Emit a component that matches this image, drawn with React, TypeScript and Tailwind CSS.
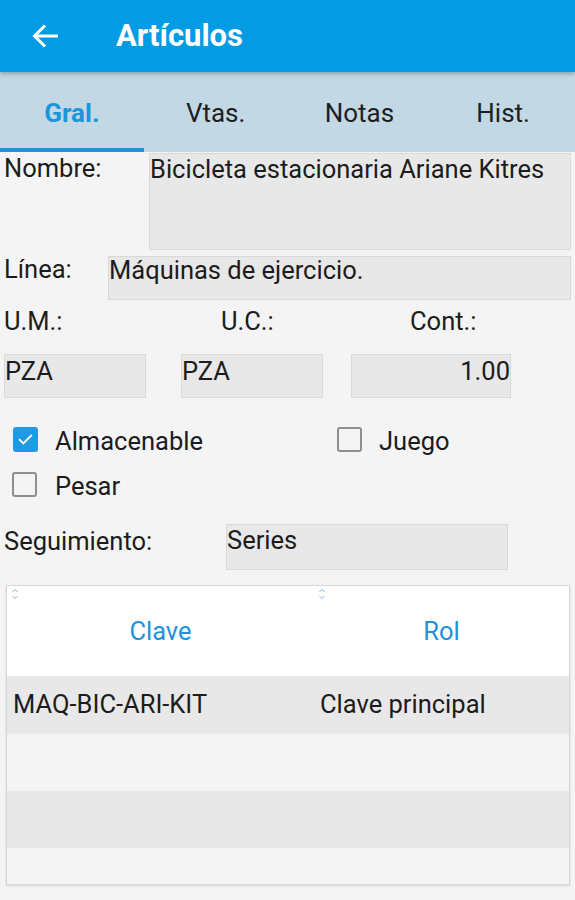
import React from 'react';

const font = { fontFamily: 'Roboto, "Noto Sans", sans-serif' };

function Box({ className = '', children }: { className?: string; children?: React.ReactNode }) {
  return (
    <div
      className={`border border-[#d9d9d9] bg-[#e8e8e8] text-[25.5px] leading-[26px] text-[#1c1c1c] ${className}`}
    >
      {children}
    </div>
  );
}

function Check({ checked = false }: { checked?: boolean }) {
  if (checked) {
    return (
      <div className="flex h-[25px] w-[25px] items-center justify-center rounded-[3px] bg-[#1e9be2]">
        <svg width="17" height="17" viewBox="0 0 24 24" fill="none">
          <path d="M4 12.5l5 5L20 6.5" stroke="white" strokeWidth="2.8" strokeLinecap="square" />
        </svg>
      </div>
    );
  }
  return <div className="h-[25px] w-[25px] rounded-[3px] border-2 border-[#8f8f8f]" />;
}

function SortMark() {
  return (
    <svg width="8" height="12" viewBox="0 0 8 12" fill="none" className="absolute left-[4px] top-[2px]">
      <path d="M1.5 4L4 1.5L6.5 4" stroke="#7fb6e6" strokeWidth="1" />
      <path d="M1.5 8L4 10.5L6.5 8" stroke="#7fb6e6" strokeWidth="1" />
    </svg>
  );
}

export default function App() {
  const tabs = ['Gral.', 'Vtas.', 'Notas', 'Hist.'];

  return (
    <div className="h-[900px] w-[575px] overflow-hidden bg-[#f4f4f4]" style={font}>
      {/* app bar */}
      <div className="relative z-10 flex h-[72px] items-center bg-[#049be5] shadow-[0_2px_4px_rgba(0,0,0,0.25)]">
        <svg width="28" height="26" viewBox="0 0 28 26" fill="none" className="ml-[32px]">
          <path d="M26 13H3M13 2.5L2.5 13L13 23.5" stroke="white" strokeWidth="3" />
        </svg>
        <h1 className="ml-[56px] text-[31px] font-bold text-white">Artículos</h1>
      </div>

      {/* tabs */}
      <div className="flex h-[80px] bg-[#c2d8e5]">
        {tabs.map((t, i) => (
          <div key={t} className="relative flex flex-1 items-center justify-center pt-[2px]">
            <span
              className={`text-[26px] ${i === 0 ? 'font-bold text-[#1a96dc]' : 'text-[#1e1e1e]'}`}
            >
              {t}
            </span>
            {i === 0 && <div className="absolute bottom-0 left-0 right-0 h-[4px] bg-[#1a96dc]" />}
          </div>
        ))}
      </div>

      {/* form */}
      <div className="text-[25.5px] leading-[26px] text-[#1c1c1c]">
        <div className="mt-[1px] flex">
          <div className="w-[149px] pl-[4px] pt-[2px]">Nombre:</div>
          <Box className="mr-[4px] h-[97px] flex-1 pt-[2px]">Bicicleta estacionaria Ariane Kitres</Box>
        </div>

        <div className="mt-[6px] flex">
          <div className="w-[108px] pl-[4px]">Línea:</div>
          <Box className="mr-[4px] h-[44px] flex-1">Máquinas de ejercicio.</Box>
        </div>

        <div className="flex h-[54px] pt-[8px]">
          <div className="w-[221px] pl-[4px]">U.M.:</div>
          <div className="w-[189px]">U.C.:</div>
          <div>Cont.:</div>
        </div>

        <div className="flex h-[44px]">
          <Box className="ml-[4px] w-[142px] pt-[3px]">PZA</Box>
          <Box className="ml-[35px] w-[142px] pt-[3px]">PZA</Box>
          <Box className="ml-[28px] w-[160px] pt-[3px] text-right">1.00</Box>
        </div>

        <div className="mt-[19px] flex h-[45px] items-center">
          <div className="ml-[13px]">
            <Check checked />
          </div>
          <span className="ml-[17px] w-[282px] pt-[2px]">Almacenable</span>
          <Check />
          <span className="ml-[17px] pt-[2px]">Juego</span>
        </div>
        <div className="flex h-[45px] items-center">
          <div className="ml-[12px]">
            <Check />
          </div>
          <span className="ml-[18px] pt-[2px]">Pesar</span>
        </div>

        <div className="mt-[17px] flex">
          <div className="w-[226px] pl-[4px] pt-[4px]">Seguimiento:</div>
          <Box className="h-[46px] w-[282px] pt-[2px]">Series</Box>
        </div>
      </div>

      {/* table */}
      <div className="ml-[6px] mt-[15px] w-[564px] border border-[#d6d6d6] shadow-[0_1px_2px_rgba(0,0,0,0.12)]">
        <div className="flex h-[90px] bg-white text-[25.5px] text-[#1f93d9]">
          <div className="relative flex w-[307px] items-center justify-center">
            <SortMark />
            Clave
          </div>
          <div className="relative flex flex-1 items-center justify-center">
            <SortMark />
            Rol
          </div>
        </div>
        <div className="flex h-[57px] items-center bg-[#e8e8e8] text-[25.5px] text-[#1c1c1c]">
          <div className="w-[307px] pl-[6px]">MAQ-BIC-ARI-KIT</div>
          <div className="pl-[6px]">Clave principal</div>
        </div>
        <div className="h-[58px] border-t border-[#ececec] bg-[#f4f4f4]" />
        <div className="h-[57px] bg-[#e8e8e8]" />
        <div className="h-[36px] bg-[#f4f4f4]" />
      </div>
    </div>
  );
}
